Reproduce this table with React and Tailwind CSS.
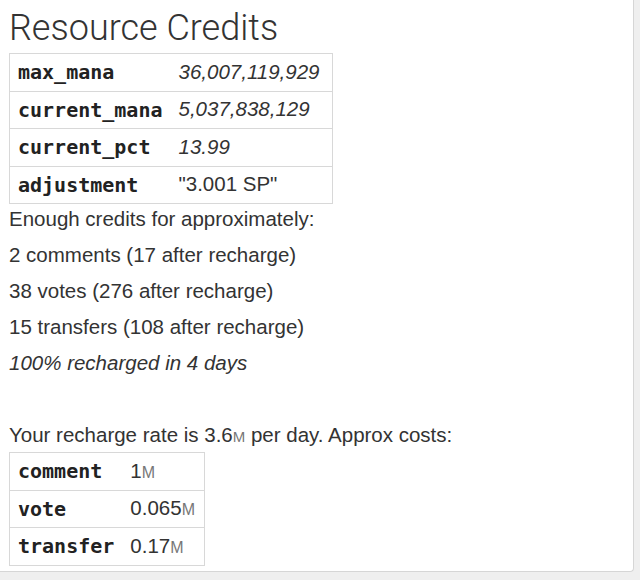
export default function App() {
  const rows = [
    ["max_mana", "36,007,119,929", true],
    ["current_mana", "5,037,838,129", true],
    ["current_pct", "13.99", true],
    ["adjustment", '"3.001 SP"', false],
  ];
  const costs = [
    ["comment", "1"],
    ["vote", "0.065"],
    ["transfer", "0.17"],
  ];
  const sans = { fontFamily: '"Liberation Sans", Arial, sans-serif' };
  return (
    <div className="w-[640px] h-[580px] bg-[#efefef] overflow-hidden" style={sans}>
      <div className="w-[634px] h-[572px] bg-white border-r border-b border-[#d6d6d6] rounded-br-[4px] pl-[9px] pt-[5px] text-[#333]">
        <h1 className="text-[36px] leading-[46px] font-light font-['Roboto',sans-serif]">
          Resource Credits
        </h1>
        <table className="border-collapse border border-[#d8d8d8] mt-[2px]">
          <tbody>
            {rows.map(([k, v, it]) => (
              <tr key={k} className="border-t border-[#d8d8d8] h-[37.5px]">
                <td className="pl-[8px] pr-[8px] font-bold text-[20px] text-[#222] font-['DejaVu_Sans_Mono',monospace] align-middle">
                  {k}
                </td>
                <td className={"pl-[8px] pr-[13px] text-[20.5px] text-[#333] align-middle " + (it ? "italic" : "")}>
                  {v}
                </td>
              </tr>
            ))}
          </tbody>
        </table>
        <div className="text-[20.5px] leading-[36px] mt-[-3px]">
          <div>Enough credits for approximately:</div>
          <div>2 comments (17 after recharge)</div>
          <div>38 votes (276 after recharge)</div>
          <div>15 transfers (108 after recharge)</div>
          <div className="italic">100% recharged in 4 days</div>
          <div>&nbsp;</div>
          <div>
            Your recharge rate is 3.6<span className="text-[15px] text-[#777]">M</span> per day. Approx costs:
          </div>
        </div>
        <table className="border-collapse border border-[#d8d8d8] mt-[-3px]">
          <tbody>
            {costs.map(([k, v]) => (
              <tr key={k} className="border-t border-[#d8d8d8] h-[37.5px]">
                <td className="pl-[8px] pr-[8px] font-bold text-[20px] text-[#222] font-['DejaVu_Sans_Mono',monospace] align-middle">
                  {k}
                </td>
                <td className="pl-[8px] pr-[9px] text-[20.5px] text-[#333] align-middle">
                  {v}
                  <span className="text-[16px] text-[#777]">M</span>
                </td>
              </tr>
            ))}
          </tbody>
        </table>
      </div>
    </div>
  );
}
